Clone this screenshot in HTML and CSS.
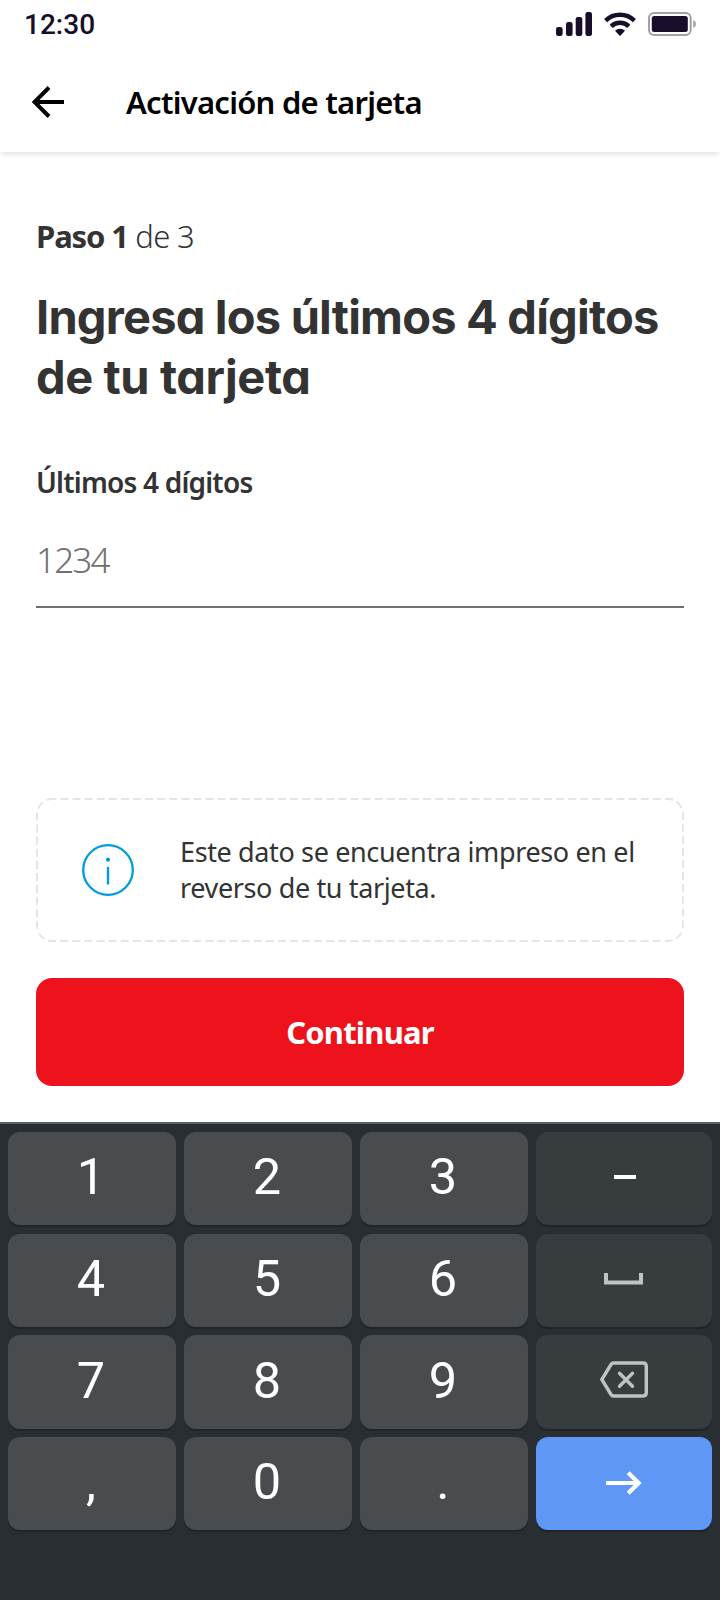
FILE: index.html
```html
<!DOCTYPE html>
<html lang="es">
<head>
  <meta charset="UTF-8" />
  <title>Activación de tarjeta</title>
  <link rel="stylesheet" href="styles.css">
</head>
<body>

<!-- Status bar -->
<div class="status-bar">
  <span class="time">12:30</span>
  <div class="status-icons">
    <svg width="36" height="24" viewBox="0 0 36 24" fill="#180e29">
      <rect x="0" y="15" width="6.6" height="9" rx="2.2" />
      <rect x="10" y="10" width="6.6" height="14" rx="2.2" />
      <rect x="19.7" y="5" width="6.6" height="19" rx="2.2" />
      <rect x="29.4" y="0" width="6.6" height="24" rx="2.2" />
    </svg>
    <svg width="32" height="24" viewBox="0 0 32 24" fill="none" stroke="#180e29" stroke-width="4.4">
      <path d="M1.6 8.6a20.6 20.6 0 0 1 28.8 0" />
      <path d="M7.2 14.4a12.6 12.6 0 0 1 17.6 0" />
      <path d="M11 18.7a7.2 7.2 0 0 1 10 0L16.6 23.6a.9.9 0 0 1-1.2 0z" fill="#180e29" stroke="none" />
    </svg>
    <svg width="48" height="24" viewBox="0 0 48 24">
      <rect x="1" y="1" width="41.7" height="22" rx="5" fill="none" stroke="#a3a0a9" stroke-width="2" />
      <rect x="3.8" y="4" width="36" height="16" rx="2.5" fill="#180e29" />
      <path d="M45.2 8c3.6 1.6 3.6 6.4 0 8z" fill="#a3a0a9" />
    </svg>
  </div>
</div>

<!-- Header -->
<header class="header">
  <svg class="back" width="32" height="32" viewBox="0 0 32 32" fill="none" stroke="#000" stroke-width="4">
    <path d="M32 16H4M17 1.5L2.5 16L17 30.5" />
  </svg>
  <h1 class="title">Activación de tarjeta</h1>
</header>

<!-- Form -->
<main class="content">
  <p class="step"><b>Paso 1</b> de 3</p>
  <h2 class="heading"><span class="line-one">Ingresa los últimos 4 dígitos</span><br>de tu tarjeta</h2>
  <label class="label" for="digits">Últimos 4 dígitos</label>
  <input class="digits" id="digits" type="text" inputmode="numeric" maxlength="4" placeholder="1234">

  <div class="info">
    <svg class="info-border" width="648" height="144" viewBox="0 0 648 144">
      <rect x="1" y="1" width="646" height="142" rx="15" fill="none" stroke="#e1e6ee" stroke-width="2" stroke-dasharray="8.06 4.03" stroke-dashoffset="3.7" />
    </svg>
    <svg class="info-icon" width="52" height="52" viewBox="0 0 52 52">
      <circle cx="26" cy="26" r="24.8" fill="none" stroke="#009cdb" stroke-width="2.3" />
      <circle cx="26" cy="15.7" r="2.1" fill="#009cdb" />
      <path d="M26 24V39.5" stroke="#009cdb" stroke-width="2.4" stroke-linecap="round" />
    </svg>
    <p class="info-text">Este dato se encuentra impreso en el<br>reverso de tu tarjeta.</p>
  </div>

  <button class="continue">Continuar</button>
</main>

<!-- Numeric keyboard -->
<div class="keyboard">
  <button class="key">1</button>
  <button class="key">2</button>
  <button class="key">3</button>
  <button class="key dark">
    <svg width="48" height="38" viewBox="0 0 48 38" fill="#fff"><rect x="14" y="17" width="22" height="4" /></svg>
  </button>
  <button class="key">4</button>
  <button class="key">5</button>
  <button class="key">6</button>
  <button class="key dark">
    <svg width="48" height="38" viewBox="0 0 48 38" fill="none" stroke="#c1c2c4" stroke-width="4"><path d="M6 14v9.4h35V14" /></svg>
  </button>
  <button class="key">7</button>
  <button class="key">8</button>
  <button class="key">9</button>
  <button class="key dark">
    <svg width="48" height="38" viewBox="0 0 48 38" fill="none" stroke="#c1c2c4" stroke-width="3.4">
      <path d="M13.5 2H43Q46.3 2 46.3 5.5V31.5Q46.3 35 43 35H13.5Q12 35 11 33.5L1.8 18.5L11 3.5Q12 2 13.5 2z" />
      <path d="M19.5 12.2L32.5 25.2M32.5 12.2L19.5 25.2" stroke-linecap="round" />
    </svg>
  </button>
  <button class="key">,</button>
  <button class="key">0</button>
  <button class="key">.</button>
  <button class="key enter">
    <svg width="48" height="38" viewBox="0 0 48 38" fill="none" stroke="#fff" stroke-width="4.2"><path d="M6 20H39M28.2 9.7L38.7 20L28.2 30.3" /></svg>
  </button>
</div>

</body>
</html>
```
FILE: styles.css
```css
html, body {
  margin: 0;
  padding: 0;
}
body {
  width: 720px;
  height: 1600px;
  display: flex;
  flex-direction: column;
  overflow: hidden;
  font-family: "Noto Sans", sans-serif;
  color: #333;
  background-color: white;
}
h1, h2, p { margin: 0; }
svg { display: block; }
button {
  border: none;
  padding: 0;
}
.status-bar {
  height: 48px;
  padding: 0 24px;
  box-sizing: border-box;
  display: flex;
  justify-content: space-between;
  align-items: center;
}
.time {
  font-family: Roboto, sans-serif;
  font-size: 28px;
  font-weight: 500;
  color: #180e29;
}
.status-icons {
  display: flex;
  gap: 12px;
}
.header {
  height: 104px;
  padding-left: 32px;
  box-sizing: border-box;
  display: flex;
  align-items: center;
  gap: 62px;
  color: #000;
  box-shadow: 0 4px 5px -2px rgba(0, 0, 0, 0.14);
}
.title {
  margin-top: 4px;
  font-size: 31px;
  font-weight: 650;
  letter-spacing: -0.75px;
}
.back {
  margin-top: 4px;
}
.content {
  height: 970px;
  padding: 59px 36px 36px;
  box-sizing: border-box;
  display: flex;
  flex-direction: column;
}
.step {
  font-size: 31px;
  line-height: 50px;
  font-weight: 300;
  letter-spacing: -0.7px;
}
.step b {
  font-weight: 700;
  letter-spacing: -1.1px;
}
.heading {
  margin-top: 26px;
  font-family: Inter, sans-serif;
  font-feature-settings: "cv11";
  font-size: 47px;
  line-height: 60px;
  font-weight: 700;
  letter-spacing: -0.4px;
}
.line-one { letter-spacing: -0.8px; }
.label {
  margin-top: 55px;
  font-size: 28px;
  line-height: 40px;
  font-weight: 600;
  letter-spacing: -0.8px;
}
.digits {
  height: 74px;
  margin-top: 20px;
  padding: 0 0 10px;
  border: none;
  border-bottom: 2px solid #6f7072;
  font-family: inherit;
  font-size: 35px;
  font-weight: 350;
  letter-spacing: -1.8px;
  outline: none;
}
.digits::placeholder {
  color: #6f7072;
  opacity: 1;
}
.info {
  position: relative;
  height: 144px;
  margin-top: auto;
  padding-left: 46px;
  box-sizing: border-box;
  display: flex;
  align-items: center;
  gap: 46px;
}
.info-border {
  position: absolute;
  top: 0;
  left: 0;
}
.info-text {
  font-size: 27px;
  line-height: 36px;
  letter-spacing: -0.37px;
  white-space: nowrap;
}
.continue {
  height: 108px;
  margin-top: 36px;
  border-radius: 16px;
  font-family: inherit;
  font-size: 31px;
  font-weight: 700;
  letter-spacing: -0.8px;
  color: white;
  background-color: #ee121c;
}
.keyboard {
  flex-grow: 1;
  padding: 8px 8px 0;
  border-top: 2px solid #5e6163;
  display: grid;
  grid-template-columns: 168px 168px 168px 176px;
  grid-auto-rows: 93.4px;
  gap: 8.3px 8px;
  background-color: #292e32;
}
.key {
  padding: 0 2px 4px 0;
  border-radius: 12px;
  display: flex;
  align-items: center;
  justify-content: center;
  font-family: Roboto, sans-serif;
  font-size: 50.5px;
  color: white;
  background-color: #494c4e;
  box-shadow: 0 2px 0 #202427;
}
.key.dark, .key.enter {
  padding: 0 0 4px;
}
.key.dark {
  background-color: #373c3f;
}
.key.enter {
  background-color: #5e97f6;
}
```
